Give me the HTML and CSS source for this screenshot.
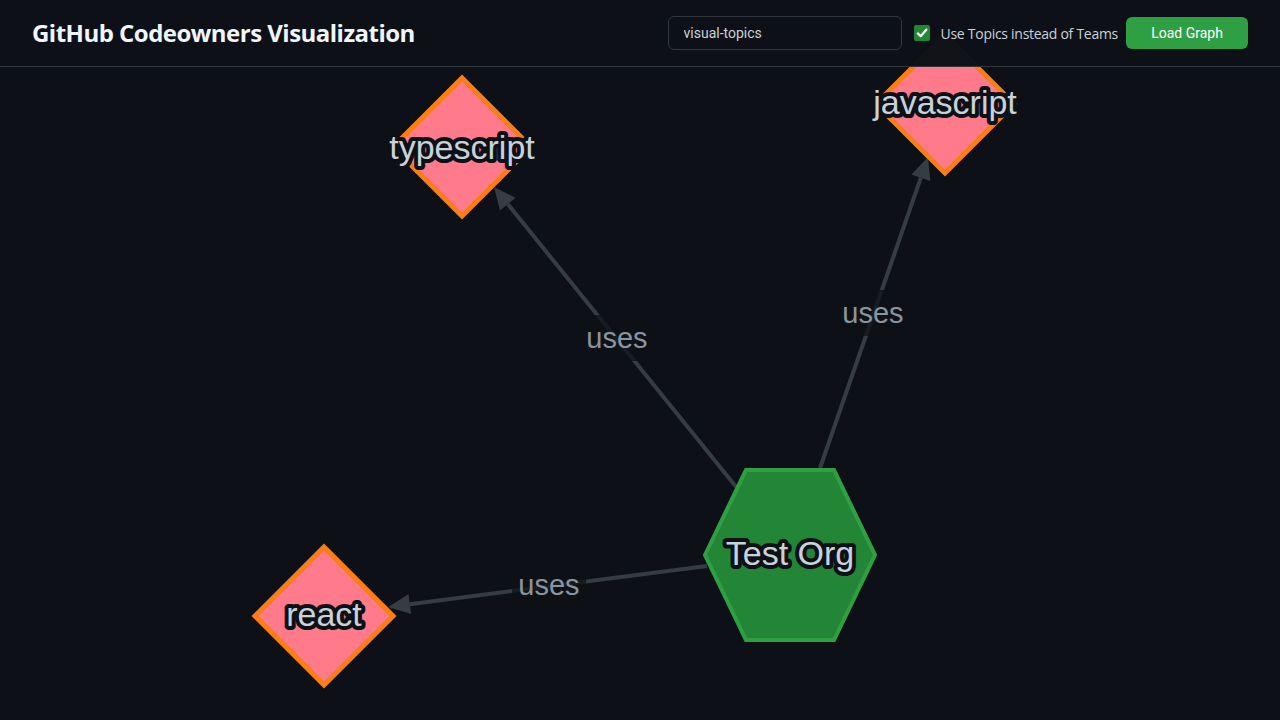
FILE: index.html
```html
<!DOCTYPE html>
<html lang="en">
<head>
<meta charset="utf-8">
<title>GitHub Codeowners Visualization</title>
<link rel="stylesheet" href="styles.css">
</head>
<body>
<header class="topbar">
  <h1 class="title">GitHub Codeowners Visualization</h1>
  <div class="controls">
    <input class="org-input" type="text" value="visual-topics">
    <label class="toggle">
      <span class="check-box">
        <svg viewBox="0 0 16 16" width="16" height="16"><path d="M3.8 8.4 L6.7 11.2 L12.3 4.7" fill="none" stroke="#fff" stroke-width="2.2" stroke-linecap="round" stroke-linejoin="round"/></svg>
      </span>
      <span class="toggle-text">Use Topics instead of Teams</span>
    </label>
    <button class="load-btn">Load Graph</button>
  </div>
</header>
<main class="graph">
  <svg class="graph-canvas" viewBox="0 67 1280 653" width="1280" height="653">
    <g class="edges">
      <line x1="737" y1="488" x2="507.8" y2="204.1" class="edge"/>
      <polygon points="494,187 515.6,197.8 500.0,210.4" class="arrow"/>
      <line x1="820" y1="468" x2="920.8" y2="177.8" class="edge"/>
      <polygon points="928,157 930.3,181.1 911.4,174.5" class="arrow"/>
      <line x1="707" y1="566" x2="409.8" y2="604.2" class="edge"/>
      <polygon points="388,607 411.1,614.1 408.5,594.3" class="arrow"/>
    </g>
    <g class="edge-labels">
      <rect x="580" y="315" width="74" height="46" class="label-bg"/>
      <text x="617" y="338" class="edge-label">uses</text>
      <rect x="836" y="290" width="74" height="46" class="label-bg"/>
      <text x="873" y="313" class="edge-label">uses</text>
      <rect x="512" y="562" width="74" height="46" class="label-bg"/>
      <text x="549" y="585" class="edge-label">uses</text>
    </g>
    <g class="nodes">
      <polygon points="462,78 531,147 462,216 393,147" class="topic"/>
      <polygon points="945,35 1014,104 945,173 876,104" class="topic"/>
      <polygon points="324,547 393,616 324,685 255,616" class="topic"/>
      <polygon points="705,555 746,470 834,470 875,555 834,640 746,640" class="org"/>
    </g>
    <g class="node-labels">
      <text x="462" y="147" class="node-label">typescript</text>
      <text x="945" y="102" class="node-label">javascript</text>
      <text x="324" y="614" class="node-label">react</text>
      <text x="790" y="553" class="node-label">Test Org</text>
    </g>
  </svg>
</main>
</body>
</html>
```
FILE: styles.css
```css
* { box-sizing: border-box; }
html, body {
  margin: 0;
  padding: 0;
  background: #0d1117;
  width: 1280px;
  height: 720px;
  overflow: hidden;
}
body {
  font-family: "Open Sans", "Noto Sans", sans-serif;
  color: #c9d1d9;
}
.topbar {
  position: relative;
  z-index: 2;
  height: 67px;
  display: flex;
  align-items: center;
  justify-content: space-between;
  padding: 0 32px;
  border-bottom: 1px solid #30363d;
  background: rgba(13, 17, 23, 0.985);
}
.title {
  margin: 0 0 1px 0;
  font-family: "Open Sans", sans-serif;
  font-size: 24px;
  font-weight: 700;
  color: #f0f6fc;
  letter-spacing: -0.52px;
}
.controls {
  display: flex;
  align-items: center;
}
.controls > * {
  flex: none;
}
.org-input {
  width: 234px;
  height: 34px;
  padding: 0 15px;
  background: #0d1117;
  border: 1px solid #30363d;
  border-radius: 6px;
  color: #c9d1d9;
  font-family: Roboto, sans-serif;
  font-size: 14px;
  outline: none;
  margin-right: 12px;
}
.toggle {
  display: flex;
  align-items: center;
  margin-right: 8px;
}
.check-box {
  flex: none;
  width: 16px;
  height: 16px;
  border-radius: 2px;
  background: #238636;
  display: flex;
  margin-right: 11px;
}
.toggle-text {
  font-family: "Open Sans", sans-serif;
  font-size: 14px;
  color: #c9d1d9;
  letter-spacing: -0.28px;
}
.load-btn {
  width: 122px;
  height: 32px;
  background: #2ea043;
  border: none;
  border-radius: 6px;
  color: #ffffff;
  font-family: Roboto, sans-serif;
  font-size: 14px;
}
.graph {
  display: block;
  height: 653px;
}
.graph-canvas {
  display: block;
  overflow: visible;
}
.edge {
  stroke: #363c44;
  stroke-width: 4;
}
.arrow {
  fill: #363c44;
}
.label-bg {
  fill: #0d1117;
  opacity: 0.75;
}
.edge-label {
  font-family: "Liberation Sans", Arial, sans-serif;
  font-size: 29px;
  fill: #8b949e;
  text-anchor: middle;
  dominant-baseline: central;
}
.topic {
  fill: #ff7b8c;
  stroke: #fb7e14;
  stroke-width: 5;
}
.org {
  fill: #238636;
  stroke: #2ea043;
  stroke-width: 4;
}
.node-label {
  font-family: "Liberation Sans", Arial, sans-serif;
  font-size: 34px;
  fill: #c9d1d9;
  stroke: #0d1117;
  stroke-width: 8;
  stroke-linejoin: round;
  paint-order: stroke;
  text-anchor: middle;
  dominant-baseline: central;
}
```
